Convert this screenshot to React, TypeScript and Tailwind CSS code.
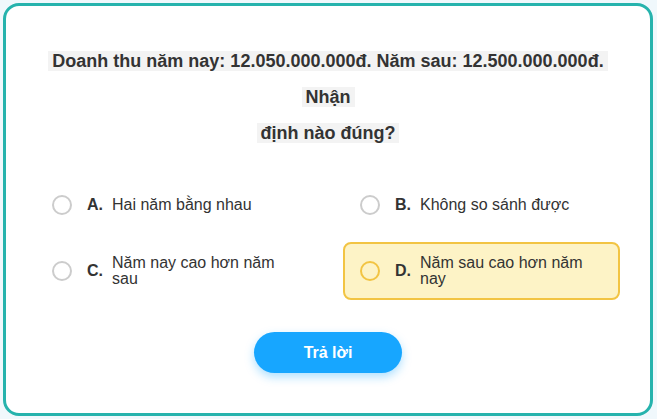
const options = [
  { key: "A", text: "Hai năm bằng nhau" },
  { key: "B", text: "Không so sánh được" },
  { key: "C", text: "Năm nay cao hơn năm sau" },
  { key: "D", text: "Năm sau cao hơn năm nay" },
];

export default function App() {
  const selected = "D";
  return (
    <div
      className="w-[657px] h-[419px] bg-[#f0f8fc] pt-[3px] pl-[3px]"
      style={{ fontFamily: '"Liberation Sans", Arial, sans-serif' }}
    >
      <div className="w-[650px] h-[413px] bg-white border-[3px] border-[#26b3ad] rounded-[16px] pt-[37px]">
        <h2 className="text-center text-[18px] font-bold leading-[36px] text-[#333333]">
          <span className="bg-[#f3f3f3] px-[4px]">
            Doanh thu năm nay: 12.050.000.000đ. Năm sau: 12.500.000.000đ.
          </span>
          <br />
          <span className="bg-[#f3f3f3] px-[4px]">Nhận</span>
          <br />
          <span className="bg-[#f3f3f3] px-[4px]">định nào đúng?</span>
        </h2>

        <div className="w-[585px] ml-[29px] mt-[25px] grid grid-cols-2 gap-x-[31px] gap-y-[8px]">
          {options.map((o) => {
            const active = o.key === selected;
            return (
              <div
                key={o.key}
                className={`h-[58px] flex items-center px-[15px] rounded-[8px] border-2 ${
                  active ? "bg-[#fdf3c6] border-[#f2c443]" : "border-transparent"
                }`}
              >
                <span
                  className={`w-[20px] h-[20px] rounded-full border-2 shrink-0 ${
                    active ? "border-[#f2c443]" : "border-[#cccccc]"
                  }`}
                />
                <span className="ml-[15px] w-[25px] shrink-0 text-[16px] font-bold text-[#333333]">
                  {o.key}.
                </span>
                <span className="max-w-[182px] text-[16px] leading-[16px] text-[#333333]">
                  {o.text}
                </span>
              </div>
            );
          })}
        </div>

        <div className="flex justify-center mt-[32px]">
          <button className="w-[148px] h-[41px] rounded-full bg-[#17a6ff] text-white text-[16px] font-bold shadow-[0_4px_10px_rgba(23,166,255,0.35)]">
            Trả lời
          </button>
        </div>
      </div>
    </div>
  );
}
